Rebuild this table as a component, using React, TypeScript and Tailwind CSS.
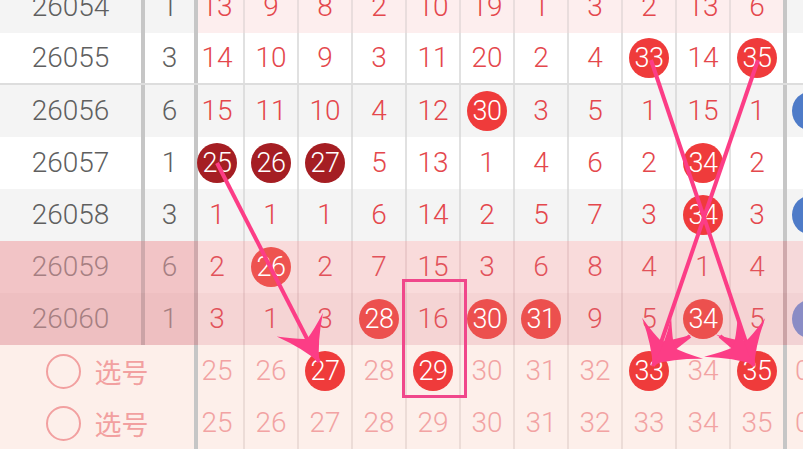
import React from "react";

type Tone = "top" | "white" | "gray" | "pink1" | "pink2";

const tones: Record<Tone, { left: string; nums: string; right: string; text: string; num: string; thick: string; thin: string; ball: string }> = {
  top: {
    left: "bg-[#f4f4f4]",
    nums: "bg-[#fdeeee]",
    right: "bg-[#f4f4f4]",
    text: "text-[#5f5f5f]",
    num: "text-[#e4474c]",
    thick: "bg-[#c6c6c6]",
    thin: "border-[#e9dddd]",
    ball: "bg-[#ef3b3b]",
  },
  white: {
    left: "bg-white",
    nums: "bg-white",
    right: "bg-white",
    text: "text-[#5f5f5f]",
    num: "text-[#e4474c]",
    thick: "bg-[#c6c6c6]",
    thin: "border-[#e1e1e1]",
    ball: "bg-[#ef3b3b]",
  },
  gray: {
    left: "bg-[#f4f4f4]",
    nums: "bg-[#f4f4f4]",
    right: "bg-[#f4f4f4]",
    text: "text-[#5f5f5f]",
    num: "text-[#e4474c]",
    thick: "bg-[#c6c6c6]",
    thin: "border-[#dedede]",
    ball: "bg-[#ef3b3b]",
  },
  pink1: {
    left: "bg-[#f2c4c6]",
    nums: "bg-[#f9dbdb]",
    right: "bg-[#f6d9da]",
    text: "text-[#a67f82]",
    num: "text-[#e2525a]",
    thick: "bg-[#cfa9ac]",
    thin: "border-[#ebc9ca]",
    ball: "bg-[#ee5350]",
  },
  pink2: {
    left: "bg-[#eebfc1]",
    nums: "bg-[#f5d4d4]",
    right: "bg-[#f2d2d4]",
    text: "text-[#a67f82]",
    num: "text-[#e2525a]",
    thick: "bg-[#cba3a6]",
    thin: "border-[#e7c3c4]",
    ball: "bg-[#ec504e]",
  },
};

type Row = {
  period: string;
  count: number;
  nums: number[];
  balls?: Record<number, "r" | "d">;
  tone: Tone;
  blue?: string;
  sep?: boolean;
};

const rows: Row[] = [
  { period: "26054", count: 1, nums: [13, 9, 8, 2, 10, 19, 1, 3, 2, 13, 6], tone: "top" },
  { period: "26055", count: 3, nums: [14, 10, 9, 3, 11, 20, 2, 4, 33, 14, 35], balls: { 8: "r", 10: "r" }, tone: "white", sep: true },
  { period: "26056", count: 6, nums: [15, 11, 10, 4, 12, 30, 3, 5, 1, 15, 1], balls: { 5: "r" }, tone: "gray", blue: "bg-[#4e7bc8]" },
  { period: "26057", count: 1, nums: [25, 26, 27, 5, 13, 1, 4, 6, 2, 34, 2], balls: { 0: "d", 1: "d", 2: "d", 9: "r" }, tone: "white" },
  { period: "26058", count: 3, nums: [1, 1, 1, 6, 14, 2, 5, 7, 3, 34, 3], balls: { 9: "r" }, tone: "gray", blue: "bg-[#4e7bc8]" },
  { period: "26059", count: 6, nums: [2, 26, 2, 7, 15, 3, 6, 8, 4, 1, 4], balls: { 1: "r" }, tone: "pink1" },
  { period: "26060", count: 1, nums: [3, 1, 3, 28, 16, 30, 31, 9, 5, 34, 5], balls: { 3: "r", 5: "r", 6: "r", 9: "r" }, tone: "pink2", blue: "bg-[#8a8cc5]" },
];

const picks = [25, 26, 27, 28, 29, 30, 31, 32, 33, 34, 35];

const font = { fontFamily: "Roboto, 'Noto Sans', 'Noto Sans CJK SC', sans-serif" };

function cellWidth(i: number) {
  if (i === 0) return "w-[47px] pr-[7px] border-r-2";
  if (i === 10) return "w-[52px]";
  return "w-[54px] border-r-2";
}

function Ball({ n, color }: { n: number; color: string }) {
  return (
    <div className={`w-[40px] h-[40px] shrink-0 rounded-full flex items-center justify-center text-white text-[27px] tracking-[-0.5px] ${color}`}>
      {n}
    </div>
  );
}

function DataRow({ row }: { row: Row }) {
  const t = tones[row.tone];
  return (
    <div className={`flex h-[52px] shrink-0 ${row.sep ? "border-b-2 border-[#dddddd]" : ""}`}>
      <div className={`w-[141px] flex items-center justify-center text-[28px] ${t.left} ${t.text}`}>{row.period}</div>
      <div className={`w-[4px] ${t.thick}`} />
      <div className={`w-[49px] flex items-center justify-center text-[28px] ${t.left} ${t.text}`}>{row.count}</div>
      <div className={`w-[4px] ${t.thick}`} />
      {row.nums.map((n, i) => {
        const b = row.balls?.[i];
        return (
          <div key={i} className={`${cellWidth(i)} ${t.thin} ${t.nums} flex items-center justify-center text-[28px] ${t.num}`}>
            {b ? <Ball n={n} color={b === "d" ? "bg-[#a51e23]" : t.ball} /> : n}
          </div>
        );
      })}
      <div className={`w-[4px] ${t.thick}`} />
      <div className={`w-[60px] flex items-center pl-[5px] ${t.right}`}>
        {row.blue && <Ball n={6} color={row.blue} />}
      </div>
    </div>
  );
}

function PickRow({ balls }: { balls: number[] }) {
  return (
    <div className="flex h-[52px] shrink-0 bg-[#fdefea]">
      <div className="w-[194px] flex items-center justify-center gap-[14px] text-[#f2a0a0]">
        <div className="w-[35px] h-[35px] rounded-full border-2 border-[#f2a0a0]" />
        <span className="text-[27px] leading-none font-normal" style={{ fontFamily: "'Noto Sans CJK SC', sans-serif" }}>选号</span>
      </div>
      <div className="w-[4px] bg-[#c6c6c6]" />
      {picks.map((n, i) => (
        <div key={n} className={`${cellWidth(i)} border-[#ecdcd7] flex items-center justify-center text-[28px] text-[#f2a3a3]`}>
          {balls.includes(n) ? <Ball n={n} color="bg-[#ef3b3b]" /> : n}
        </div>
      ))}
      <div className="w-[4px] bg-[#c6c6c6]" />
      <div className="w-[60px] flex items-center pl-[8px] text-[28px] text-[#f2a3a3]">06</div>
    </div>
  );
}

export default function App() {
  return (
    <div className="relative w-[803px] h-[451px] overflow-hidden bg-white font-light" style={font}>
      <div className="flex flex-col -mt-[19px] w-[900px]">
        {rows.map((r) => (
          <DataRow key={r.period} row={r} />
        ))}
        <PickRow balls={[27, 29, 33, 35]} />
        <PickRow balls={[]} />
      </div>

      {/* trend arrows and the highlight box */}
      <svg className="absolute inset-0 pointer-events-none" width={803} height={451} viewBox="0 0 803 451">
        <defs>
          <marker id="head" markerUnits="userSpaceOnUse" markerWidth={46} markerHeight={60} viewBox="-44 -30 46 60" refX={0} refY={0} orient="auto">
            <path d="M1,0 Q-18,-7 -42,-26 Q-30,-9 -26,0 Q-30,9 -42,26 Q-18,7 1,0 Z" fill="#fc3d86" />
          </marker>
        </defs>
        <line x1={217} y1={163} x2={319} y2={362} stroke="#fc3d86" strokeWidth={4} markerEnd="url(#head)" />
        <line x1={651} y1={60} x2={754} y2={366} stroke="#fc3d86" strokeWidth={4} markerEnd="url(#head)" />
        <line x1={758} y1={60} x2={653} y2={366} stroke="#fc3d86" strokeWidth={4} markerEnd="url(#head)" />
        <line x1={690} y1={336} x2={654} y2={364} stroke="#fc3d86" strokeWidth={4} markerEnd="url(#head)" />
        <line x1={720} y1={336} x2={753} y2={364} stroke="#fc3d86" strokeWidth={4} markerEnd="url(#head)" />
        <rect x={403.5} y={280.5} width={62} height={116} fill="none" stroke="#f0478b" strokeWidth={3} />
      </svg>
    </div>
  );
}
